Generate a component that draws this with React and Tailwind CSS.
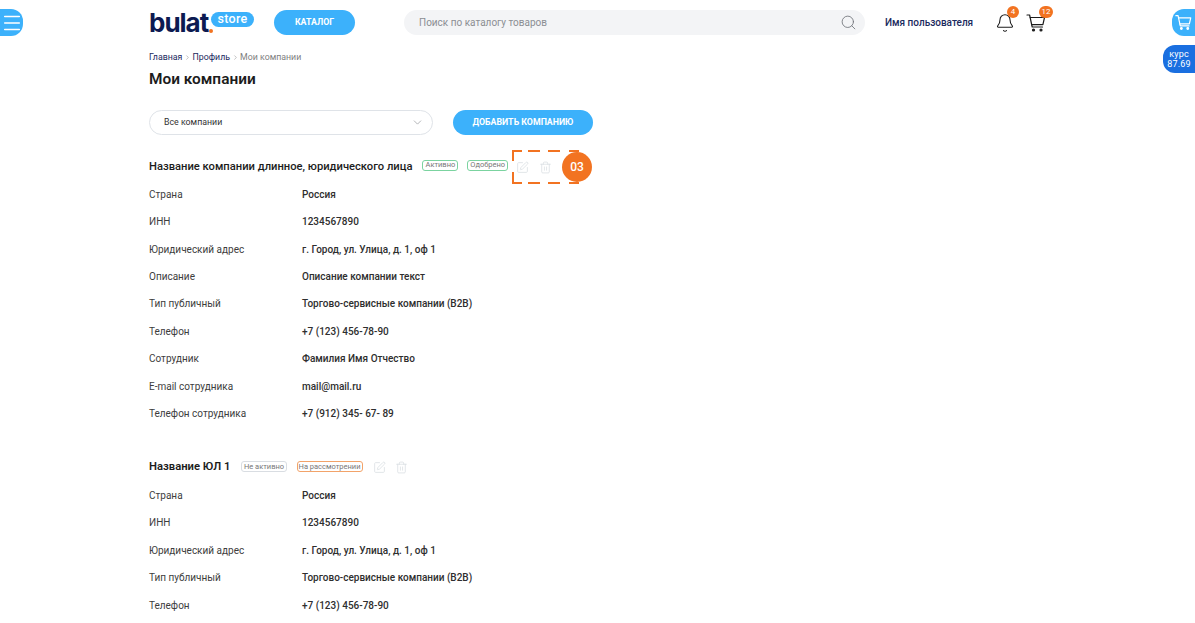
import React from 'react';
import { Search, ChevronDown, Menu, Bell, SquarePen, Trash2, ChevronRight } from 'lucide-react';

const mainRows = [
  ['Страна', 'Россия'],
  ['ИНН', '1234567890'],
  ['Юридический адрес', 'г. Город, ул. Улица, д. 1, оф 1'],
  ['Описание', 'Описание компании текст'],
  ['Тип публичный', 'Торгово-сервисные компании (B2B)'],
  ['Телефон', '+7 (123) 456-78-90'],
  ['Сотрудник', 'Фамилия Имя Отчество'],
  ['E-mail сотрудника', 'mail@mail.ru'],
  ['Телефон сотрудника', '+7 (912) 345- 67- 89'],
];

const secondRows = [
  ['Страна', 'Россия'],
  ['ИНН', '1234567890'],
  ['Юридический адрес', 'г. Город, ул. Улица, д. 1, оф 1'],
  ['Тип публичный', 'Торгово-сервисные компании (B2B)'],
  ['Телефон', '+7 (123) 456-78-90'],
];

const CartIcon = ({ className, strokeWidth = 1.2 }) => (
  <svg viewBox="0 0 20 20" fill="none" stroke="currentColor" strokeWidth={strokeWidth} strokeLinecap="round" strokeLinejoin="round" className={className}>
    <path d="M1 2h2.6l2.6 12h10.3" />
    <path d="M4.2 4.5H18.5l-1.6 7.2H5.7" />
    <circle cx="7.5" cy="17" r="1" fill="currentColor" />
    <circle cx="15" cy="17" r="1" fill="currentColor" />
  </svg>
);

const Rows = ({ rows }) => (
  <div className="flex flex-col">
    {rows.map(([label, value]) => (
      <div key={label} className="flex h-[27.4px] items-center text-[10px]">
        <span className="w-[153px] text-[#3d3d3d]">{label}</span>
        <span className="font-medium text-[#2e2e2e]">{value}</span>
      </div>
    ))}
  </div>
);

const Tag = ({ className, children }) => (
  <span className={`flex h-[11px] items-center rounded-[3px] border text-[7.5px] text-[#777] ${className}`}>
    {children}
  </span>
);

const Counter = ({ className, children }) => (
  <span className={`absolute flex h-[12px] items-center justify-center rounded-full bg-[#f27321] text-[8px] text-white ${className}`}>
    {children}
  </span>
);

const App = () => {
  return (
    <div className="relative h-[623px] w-[1195px] overflow-hidden bg-white font-['Roboto',sans-serif]">
      {/* Floating side buttons */}
      <button className="absolute left-0 top-[9px] flex h-[27px] w-[23px] items-center justify-center rounded-r-[12px] bg-[#3cb1fb] text-white">
        <Menu className="h-[22px] w-[22px]" strokeWidth={1.6} />
      </button>
      <button className="absolute right-0 top-[9px] flex h-[27px] w-[23px] items-center justify-center rounded-l-[12px] bg-[#3cb1fb] text-white">
        <CartIcon className="h-[17px] w-[17px]" strokeWidth={1.4} />
      </button>
      <div className="absolute right-0 top-[45px] flex h-[28px] w-[32px] flex-col items-center justify-center rounded-l-[12px] bg-[#1a6fe0] text-[9px] leading-[10px] tracking-[0.2px] text-white">
        <span>курс</span>
        <span>87.69</span>
      </div>

      <div className="pl-[149px]">
        {/* Header */}
        <header className="flex h-[45px] items-center">
          <div className="relative h-[26px] w-[105px]">
            <span className="absolute left-0 top-[-3px] font-['Inter',sans-serif] text-[26px] font-bold leading-[32px] tracking-[-1px] text-[#0c1a52]">bulat</span>
            <span className="absolute left-[60px] top-[19px] h-[4px] w-[4px] rounded-full bg-[#f27321]" />
            <span className="absolute left-[62px] top-[2px] flex h-[15px] w-[43px] items-center justify-center rounded-full bg-[#3cb1fb] text-[12.5px] font-medium tracking-[0.3px] text-white">store</span>
          </div>
          <button className="ml-[20px] h-[25px] w-[81px] rounded-full bg-[#3cb1fb] text-[8.8px] font-bold text-white">КАТАЛОГ</button>
          <div className="ml-[49px] flex h-[25px] w-[461px] items-center justify-between rounded-full bg-[#f3f4f6] pl-[15px] pr-[8px]">
            <span className="text-[10px] text-[#8b8e93]">Поиск по каталогу товаров</span>
            <Search className="h-[17px] w-[17px] text-[#6f7378]" strokeWidth={1.2} />
          </div>
          <span className="ml-[20px] w-[110px] text-[10px] font-medium text-[#1b2a5e]">Имя пользователя</span>
          <div className="relative h-[20px] w-[20px]">
            <Bell className="h-[20px] w-[20px] text-[#1c1c1c]" strokeWidth={1.3} />
            <Counter className="left-[12px] top-[-7px] w-[12px]">4</Counter>
          </div>
          <div className="relative ml-[11px] h-[20px] w-[20px]">
            <CartIcon className="h-[20px] w-[20px] text-[#1c1c1c]" />
            <Counter className="left-[13px] top-[-7px] w-[14px]">12</Counter>
          </div>
        </header>

        {/* Breadcrumbs */}
        <nav className="mt-[7px] flex h-[11px] items-center text-[8.8px]">
          <span className="text-[#1b2a5e]">Главная</span>
          <ChevronRight className="mx-[1.5px] h-[7px] w-[7px] text-[#999]" />
          <span className="text-[#1b2a5e]">Профиль</span>
          <ChevronRight className="mx-[1.5px] h-[7px] w-[7px] text-[#999]" />
          <span className="text-[#808080]">Мои компании</span>
        </nav>

        <h1 className="mt-[6px] text-[15.4px] font-semibold leading-[20px] text-[#1c1c1c]">Мои компании</h1>

        {/* Filter */}
        <div className="mt-[21px] flex items-center">
          <div className="flex h-[25px] w-[284px] items-center justify-between rounded-full border border-[#dfe3e8] pl-[14px] pr-[8px]">
            <span className="text-[8.8px] text-[#333]">Все компании</span>
            <ChevronDown className="h-[13px] w-[13px] text-[#8b8e93]" strokeWidth={1.2} />
          </div>
          <button className="ml-[20px] h-[25px] w-[140px] rounded-full bg-[#3cb1fb] text-[8.8px] font-bold text-white">ДОБАВИТЬ КОМПАНИЮ</button>
        </div>

        {/* First company */}
        <section className="mt-[21px]">
          <div className="relative flex h-[22px] items-center">
            <h2 className="text-[11.2px] font-medium text-[#1c1c1c]">Название компании длинное, юридического лица</h2>
            <Tag className="relative top-[-2px] ml-[10px] border-[#7bd3a0] px-[2px]">Активно</Tag>
            <Tag className="relative top-[-2px] ml-[9px] border-[#7bd3a0] px-[2px]">Одобрено</Tag>
            <SquarePen className="ml-[8px] h-[13px] w-[13px] text-[#d5dbe0]" strokeWidth={1.3} />
            <Trash2 className="ml-[10px] h-[13px] w-[13px] text-[#d5dbe0]" strokeWidth={1.3} />
            {/* Callout over the action icons */}
            <svg viewBox="0 0 70 36" fill="none" stroke="#f27321" strokeWidth="2" className="absolute left-[362px] top-[-7px] h-[36px] w-[70px]">
              <path d="M11 2H2v10M2 23v11h9M17 2h12M37 2h12M58 2h10M17 34h12M37 34h12M58 34h10" />
            </svg>
            <div className="absolute left-[413px] top-[-4px] flex h-[30px] w-[30px] items-center justify-center rounded-full bg-[#f27321] text-[12px] font-medium text-white">03</div>
          </div>
          <div className="mt-[2.7px]">
            <Rows rows={mainRows} />
          </div>
        </section>

        {/* Second company */}
        <section className="mt-[29.3px]">
          <div className="flex h-[22px] items-center">
            <h2 className="text-[11.25px] font-semibold text-[#1c1c1c]">Название ЮЛ 1</h2>
            <Tag className="relative top-[-1px] ml-[11px] border-[#d9dde2] px-[1.5px]">Не активно</Tag>
            <Tag className="relative top-[-1px] ml-[10px] border-[1.5px] border-[#f2a36a] px-[1px]">На рассмотрении</Tag>
            <SquarePen className="ml-[10px] h-[13px] w-[13px] text-[#d5dbe0]" strokeWidth={1.3} />
            <Trash2 className="ml-[9px] h-[13px] w-[13px] text-[#d5dbe0]" strokeWidth={1.3} />
          </div>
          <div className="mt-[3.3px]">
            <Rows rows={secondRows} />
          </div>
        </section>
      </div>
    </div>
  );
};

export default App;
